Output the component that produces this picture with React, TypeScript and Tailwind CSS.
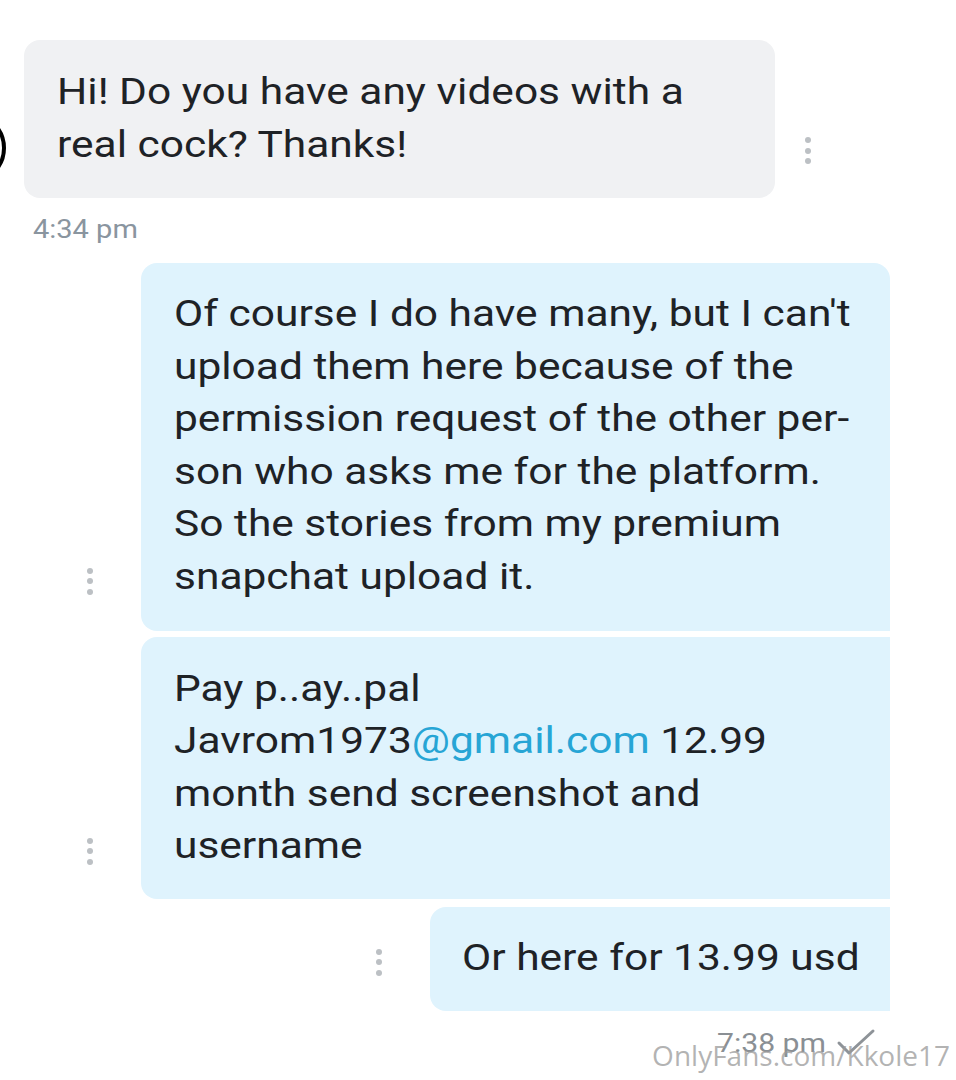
import React from "react";

const Dots = ({ className = "" }: { className?: string }) => (
  <div className={"flex flex-col items-center gap-[4.5px] " + className}>
    <span className="block w-[6px] h-[6px] rounded-full bg-[#bcc0c4]" />
    <span className="block w-[6px] h-[6px] rounded-full bg-[#bcc0c4]" />
    <span className="block w-[6px] h-[6px] rounded-full bg-[#bcc0c4]" />
  </div>
);

export default function App() {
  return (
    <div
      className="relative w-[956px] h-[1080px] bg-white overflow-hidden text-[#1e2226]"
      style={{ fontFamily: "Roboto, 'Liberation Sans', sans-serif" }}
    >
      {/* incoming */}
      <div className="flex items-end pt-[40px] pl-[24px]">
        <div className="relative">
          <div className="absolute left-[-90px] top-[72px] w-[72px] h-[72px] rounded-full border-[4px] border-black" />
          <div className="w-[751px] rounded-[16px] bg-[#f0f1f3] pl-[33px] pr-[20px] py-[26px] text-[36px] leading-[53px]">
            <div className="origin-left scale-x-[1.18] whitespace-nowrap">
              Hi! Do you have any videos with a
              <br />
              real cock? Thanks!
            </div>
          </div>
        </div>
        <Dots className="ml-[30px] mb-[34px]" />
      </div>
      <div className="mt-[16px] pl-[33px] text-[25px] leading-[32px] text-[#8a959f]">
        <div className="origin-left scale-x-[1.16] whitespace-nowrap">4:34 pm</div>
      </div>

      {/* outgoing */}
      <div className="mt-[17px] flex flex-col items-end gap-[6px] pr-[66px]">
        <div className="flex items-end">
          <Dots className="mr-[48px] mb-[36px]" />
          <div className="w-[749px] rounded-tl-[16px] rounded-tr-[16px] rounded-bl-[16px] bg-[#dff3fd] pl-[33px] pr-[20px] pt-[25px] pb-[27px] text-[36px] leading-[52.6px]">
            <div className="origin-left scale-x-[1.18] whitespace-nowrap">
              Of course I do have many, but I can't
              <br />
              upload them here because of the
              <br />
              permission request of the other per-
              <br />
              son who asks me for the platform.
              <br />
              So the stories from my premium
              <br />
              snapchat upload it.
            </div>
          </div>
        </div>
        <div className="flex items-end">
          <Dots className="mr-[48px] mb-[34px]" />
          <div className="w-[749px] rounded-bl-[16px] rounded-tl-[16px] bg-[#dff3fd] pl-[33px] pr-[20px] py-[26px] text-[36px] leading-[52.6px]">
            <div className="origin-left scale-x-[1.18] whitespace-nowrap">
              Pay p..ay..pal
              <br />
              Javrom1973<span className="text-[#27a5d5]">@gmail.com</span> 12.99
              <br />
              month send screenshot and
              <br />
              username
            </div>
          </div>
        </div>
        <div className="mt-[2px] flex items-end">
          <Dots className="mr-[48px] mb-[35px]" />
          <div className="w-[460px] rounded-l-[16px] bg-[#dff3fd] pl-[32px] pr-[20px] pt-[25px] pb-[26px] text-[36px] leading-[53px]">
            <div className="origin-left scale-x-[1.18] whitespace-nowrap">Or here for 13.99 usd</div>
          </div>
        </div>
      </div>

      <div className="mt-[16px] flex items-center justify-end pr-[80px] text-[#8a8f94]">
        <span className="block origin-right scale-x-[1.16] whitespace-nowrap text-[26px] leading-[32px]">7:38 pm</span>
        <svg className="ml-[10px]" width="40" height="30" viewBox="0 0 40 30">
          <path d="M3 15 L13 25 L37 3" fill="none" stroke="#8e9398" strokeWidth="3" strokeLinecap="round" strokeLinejoin="round" />
        </svg>
      </div>

      <div
        className="absolute right-[6px] top-[1037px] text-[28px] leading-[36px] text-[#9a9a9a]/75"
        style={{ fontFamily: "'Open Sans', 'Noto Sans', sans-serif" }}
      >
        OnlyFans.com/Kkole17
      </div>
    </div>
  );
}
